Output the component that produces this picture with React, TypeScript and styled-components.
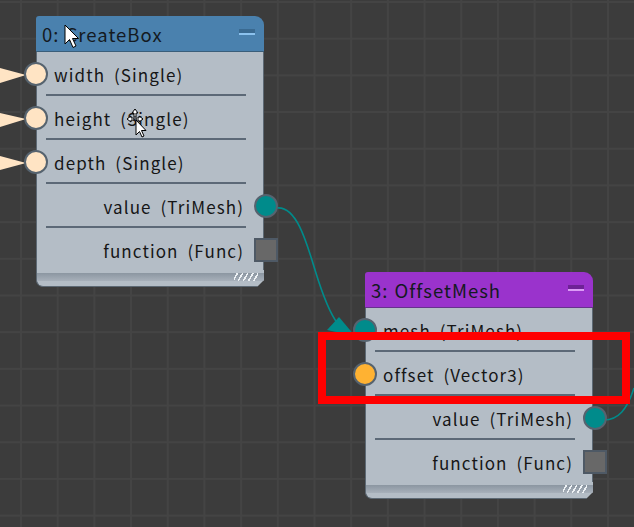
import styled, { createGlobalStyle } from "styled-components";

const GlobalStyle = createGlobalStyle`
  html, body {
    margin: 0;
    padding: 0;
    background: #3c3c3c;
  }
`;

const Canvas = styled.div`
  position: relative;
  width: 634px;
  height: 527px;
  overflow: hidden;
  background-color: #3c3c3c;
  background-image: linear-gradient(to right, #444 2px, transparent 2px),
    linear-gradient(to bottom, #444 2px, transparent 2px);
  background-size: 36.7px 36.7px;
  background-position: 20px 1px;
  font-family: "Noto Sans CJK JP", "Noto Sans", sans-serif;
`;

const Wires = styled.svg`
  position: absolute;
  left: 0;
  top: 0;
`;

const NodeBox = styled.div<{ $x: number; $y: number }>`
  position: absolute;
  left: ${(p) => p.$x}px;
  top: ${(p) => p.$y}px;
  width: 228px;
  display: flex;
  flex-direction: column;
`;

const Header = styled.div<{ $bg: string }>`
  height: 36px;
  display: flex;
  align-items: center;
  justify-content: space-between;
  padding: 0 9px 0 6px;
  background: ${(p) => p.$bg};
  border-radius: 3px 9px 0 0;
  border-bottom: 1px solid rgba(40, 50, 60, 0.45);
  box-sizing: border-box;
  font-size: 18.5px;
  color: #141a22;
  letter-spacing: 1px;
  word-spacing: 1px;
`;

const MinButton = styled.div<{ $dark: string; $light: string }>`
  width: 16px;
  height: 4px;
  background: ${(p) => p.$dark};
  border-bottom: 2px solid ${(p) => p.$light};
  margin-top: -3px;
`;

const Body = styled.div`
  background: #b4bdc6;
  border-left: 1px solid #5d6974;
  border-right: 1px solid #5d6974;
  display: flex;
  flex-direction: column;
`;

const Row = styled.div<{ $align: "left" | "right" }>`
  position: relative;
  height: 42px;
  display: flex;
  align-items: center;
  justify-content: ${(p) => (p.$align === "left" ? "flex-start" : "flex-end")};
  padding: 2px 19px 0 17px;
  box-sizing: border-box;
  font-size: 17px;
  color: #161616;
  letter-spacing: 1.1px;
  word-spacing: 4px;
`;

const Divider = styled.div`
  height: 2px;
  margin: 0 17px 0 9px;
  background: #5c6977;
`;

const Port = styled.div<{ $side: "in" | "out"; $color: string }>`
  position: absolute;
  top: 50%;
  ${(p) => (p.$side === "in" ? "left: -13px;" : "right: -15px;")}
  width: 24px;
  height: 24px;
  margin-top: -11px;
  box-sizing: border-box;
  border-radius: 50%;
  background: ${(p) => p.$color};
  border: 2px solid #56636f;
`;

const FuncPort = styled.div`
  position: absolute;
  top: 50%;
  right: -15px;
  width: 24px;
  height: 24px;
  margin-top: -11px;
  box-sizing: border-box;
  background: #686868;
  border: 2px solid #4e5965;
`;

const Footer = styled.div`
  height: 17px;
  box-sizing: border-box;
  padding-top: 3px;
  background: #b4bdc6;
  border-left: 1px solid #5d6974;
  border-bottom: 1px solid #5d6974;
  border-radius: 0 0 0 7px;
  clip-path: polygon(0 0, 100% 0, 100% calc(100% - 7px), calc(100% - 7px) 100%, 0 100%);
`;

const Grip = styled.div`
  height: 8px;
  background: linear-gradient(#8b96a1, #a7b0ba);
  display: flex;
  justify-content: flex-end;
  padding-right: 6px;
`;

const Hatch = styled.div`
  width: 24px;
  height: 100%;
  background: repeating-linear-gradient(
    -60deg,
    transparent 0 3px,
    #eef2f5 3px 4.5px
  );
`;

const Highlight = styled.div`
  position: absolute;
  left: 318px;
  top: 332px;
  width: 312px;
  height: 72px;
  box-sizing: border-box;
  border: 8px solid #ff0000;
`;

const Cursor = styled.svg<{ $x: number; $y: number }>`
  position: absolute;
  left: ${(p) => p.$x}px;
  top: ${(p) => p.$y}px;
`;

type Slot = {
  label: string;
  side: "in" | "out" | "func";
  color?: string;
};

type NodeProps = {
  x: number;
  y: number;
  title: string;
  headerBg: string;
  btnDark: string;
  btnLight: string;
  slots: Slot[];
};

const GraphNode = ({ x, y, title, headerBg, btnDark, btnLight, slots }: NodeProps) => (
  <NodeBox $x={x} $y={y}>
    <Header $bg={headerBg}>
      <span>{title}</span>
      <MinButton $dark={btnDark} $light={btnLight} />
    </Header>
    <Body>
      {slots.map((s, i) => (
        <div key={s.label}>
          <Row $align={s.side === "in" ? "left" : "right"}>
            {s.label}
            {s.side === "in" && <Port $side="in" $color={s.color!} />}
            {s.side === "out" && <Port $side="out" $color={s.color!} />}
            {s.side === "func" && <FuncPort />}
          </Row>
          {i < slots.length - 1 && <Divider />}
        </div>
      ))}
    </Body>
    <Footer>
      <Grip>
        <Hatch />
      </Grip>
    </Footer>
  </NodeBox>
);

const App = () => {
  return (
    <>
      <GlobalStyle />
      <Canvas>
        <Wires width="634" height="527">
          {/* incoming wire ends on the left */}
          <polygon points="0,68 26,75 0,83" fill="#ffe4c4" />
          <polygon points="0,113 26,119 0,127" fill="#ffe4c4" />
          <polygon points="0,156 26,163 0,170" fill="#ffe4c4" />
          {/* value -> mesh */}
          <path
            d="M277,208 C296,206 306,240 315,270 C323,296 330,314 338,324"
            stroke="#008b8b"
            strokeWidth="1.6"
            fill="none"
          />
          <polygon points="327,330 339,317 355,336" fill="#008b8b" />
          {/* value out of OffsetMesh */}
          <path
            d="M604,420 C618,420 627,410 634,388"
            stroke="#008b8b"
            strokeWidth="1.6"
            fill="none"
          />
        </Wires>

        <GraphNode
          x={36}
          y={16}
          title="0: CreateBox"
          headerBg="#4a81ae"
          btnDark="#3a6a91"
          btnLight="#8cc2ee"
          slots={[
            { label: "width (Single)", side: "in", color: "#ffe4c4" },
            { label: "height (Single)", side: "in", color: "#ffe4c4" },
            { label: "depth (Single)", side: "in", color: "#ffe4c4" },
            { label: "value (TriMesh)", side: "out", color: "#008b8b" },
            { label: "function (Func)", side: "func" },
          ]}
        />

        <GraphNode
          x={365}
          y={272}
          title="3: OffsetMesh"
          headerBg="#9a33cc"
          btnDark="#6e2296"
          btnLight="#dc9cf6"
          slots={[
            { label: "mesh (TriMesh)", side: "in", color: "#008b8b" },
            { label: "offset (Vector3)", side: "in", color: "#ffb232" },
            { label: "value (TriMesh)", side: "out", color: "#008b8b" },
            { label: "function (Func)", side: "func" },
          ]}
        />

        <Highlight />

        <Cursor $x={64} $y={24} width="16" height="26" viewBox="0 0 16 26">
          <polygon
            points="1,1 1,20 5.5,15.5 9,23.5 12,22 8.5,14.5 14.5,14.5"
            fill="#fff"
            stroke="#000"
            strokeWidth="1"
          />
        </Cursor>

        <Cursor $x={126} $y={108} width="26" height="32" viewBox="0 0 26 32">
          <g stroke="#000" strokeWidth="1" fill="#fff">
            <polygon points="9,1 12,5 10,5 10,9 8,9 8,5 6,5" />
            <polygon points="1,11 5,8 5,10 8,10 8,12 5,12 5,14" />
            <polygon points="17,11 13,8 13,10 10,10 10,12 13,12 13,14" />
            <polygon points="10,12 10,27 13.5,23.5 16,29 18,28 15.5,22.5 20,22.5" />
          </g>
        </Cursor>
      </Canvas>
    </>
  );
};

export default App;
